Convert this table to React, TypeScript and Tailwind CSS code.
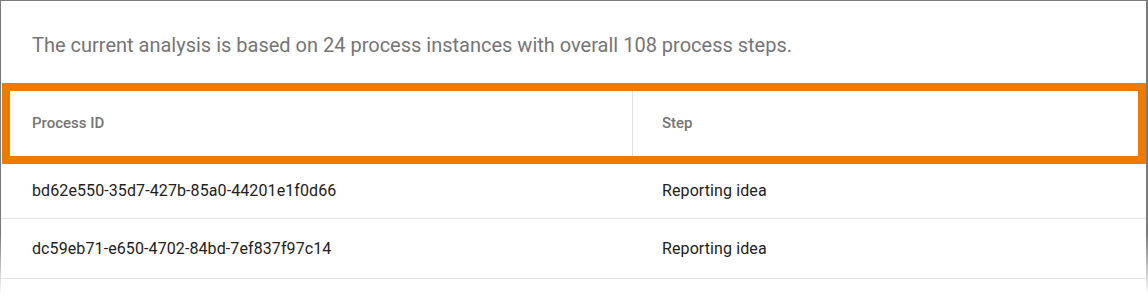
const rows = [
  { id: 'bd62e550-35d7-427b-85a0-44201e1f0d66', step: 'Reporting idea', h: 'h-[54px]' },
  { id: 'dc59eb71-e650-4702-84bd-7ef837f97c14', step: 'Reporting idea', h: 'h-[59px]' },
];

export default function App() {
  return (
    <div className="h-[300px] w-[1148px] bg-linear-to-b from-[#7a7a7a] from-[78%] to-white to-[98%] pl-px pr-[2px] pt-px font-[Roboto,sans-serif]">
      <div className="h-full bg-white">
        <p className="pl-[31px] pt-[32px] pb-[26px] text-[20px] leading-6 text-[#757575]">
          The current analysis is based on 24 process instances with overall 108 process steps.
        </p>

        {/* header row, outlined */}
        <div className="ml-px flex h-[81px] border-8 border-[#ef7a00] text-[15px] font-medium text-[#757575]">
          <div className="flex w-[622px] items-center pl-[22px]">Process ID</div>
          <div className="flex flex-1 items-center border-l border-[#e0e0e0] pl-[29px]">Step</div>
        </div>

        {rows.map((r) => (
          <div
            key={r.id}
            className={`flex ${r.h} items-center border-b border-[#e5e5e5] text-[16px] tracking-[0.1px] text-[#212121] box-content`}
          >
            <div className="w-[631px] pl-[31px]">{r.id}</div>
            <div className="flex-1 pl-[30px]">{r.step}</div>
          </div>
        ))}
      </div>
    </div>
  );
}
